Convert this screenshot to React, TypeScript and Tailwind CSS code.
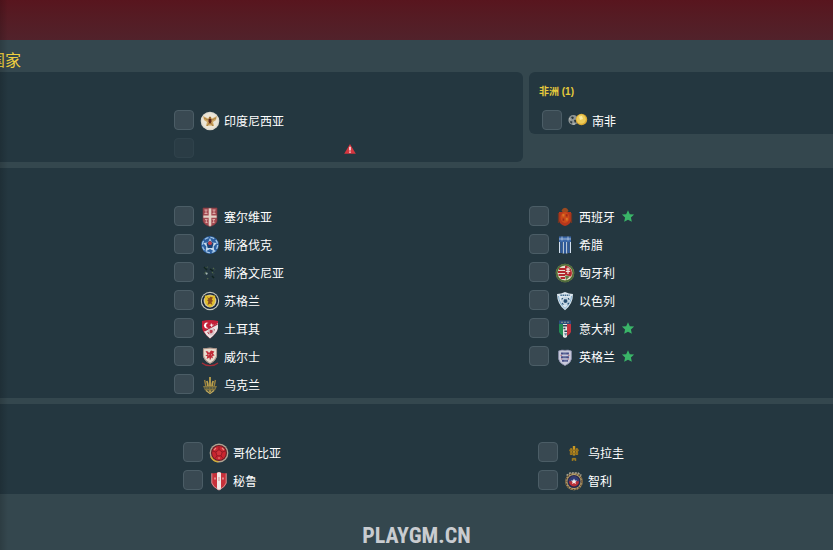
import type { ReactNode } from "react";

import clsx from "clsx";

type Nation = {
  id: string;
  name: string;
  starred?: boolean;
};

const STAR = "M10 .4 L12.9 6.6 L19.7 7.3 L14.6 11.9 L16.1 18.8 L10 15.3 L3.9 18.8 L5.4 11.9 L.3 7.3 L7.1 6.6 Z";

const badges: Record<string, ReactNode> = {
  indonesia: (
    <>
      <circle cx="10" cy="10" r="9.3" fill="#dcd8cd" />
      <circle cx="10" cy="10" r="8" fill="#ece5d6" />
      <path d="M3 5 L8 7.5 L10 5 L12 7.5 L17 5 L16 9 L13 11 L14 15 L10 14.5 L6 15 L7 11 L4 9 Z" fill="#cfa765" />
      <path d="M4 7 L8 9 M16 7 L12 9 M7 15 L9 12 M13 15 L11 12" stroke="#a9803f" />
      <path d="M8.5 8 H11.5 V11 L10 13 L8.5 11 Z" fill="#5c2418" />
      <path d="M9.2 6 H10.8 V8 H9.2 Z" fill="#8a5b2a" />
    </>
  ),
  southAfrica: (
    <>
      <circle cx="5.3" cy="9" r="4.9" fill="#8f9594" />
      <path d="M3 6 L5 5.4 L6 7 L4.2 8.2 Z M2.2 10 L4.4 10.5 L4 12.4 L2.4 12 Z M6 9 L8.6 8.4 V11.6 L6.6 11.6 Z" fill="#2b373d" />
      <path d="M1 7.5 L2.4 8.5 M4.6 13.2 L7 13" stroke="#c6cac8" />
      <circle cx="13.5" cy="8.5" r="5.7" fill="#d9a832" />
      <circle cx="13.2" cy="8.2" r="4.6" fill="#eccb58" />
      <path d="M11 5.5 L14 5 L15 8 L12 9 Z" fill="#fae9a0" />
    </>
  ),
  serbia: (
    <>
      <path d="M3 1 H17 V14 Q16 18 10 19.5 Q4 18 3 14 Z" fill="#a34a52" />
      <path d="M8.7 1 H11.3 V19 L10 19.5 L8.7 19 Z M3 8.4 H17 V10.8 H3 Z" fill="#e3d2c6" />
      <path
        d="M4.5 3 H7.5 M4.5 6.5 H7.5 M12.5 3 H15.5 M12.5 6.5 H15.5 M5 12.5 H7.5 M5.5 15.5 H7.5 M12.5 12.5 H15 M12.5 15.5 H14.5 M6 3 V6.5 M14 3 V6.5 M6.3 12.5 V15.5 M13.7 12.5 V15.5"
        stroke="#dda9a6"
      />
      <path d="M3 1 H17 V14 Q16 18 10 19.5 Q4 18 3 14 Z" fill="none" stroke="#7d3a41" strokeWidth=".7" />
    </>
  ),
  slovakia: (
    <>
      <circle cx="10" cy="10" r="8.9" fill="#2b5fa0" />
      <circle cx="10" cy="10" r="7.6" fill="none" stroke="#a3c6e6" strokeWidth="1.3" strokeDasharray="4 2" />
      <path d="M10 3 L12 7.5 L16.8 8 L13.6 11.5 L14.5 16.5 L10 14 L5.5 16.5 L6.4 11.5 L3.2 8 L8 7.5 Z" fill="#c4d9eb" />
      <path d="M10 5.4 L13.5 8.6 L12.3 13 H7.7 L6.5 8.6 Z" fill="#174175" />
      <circle cx="10" cy="8.2" r="1.9" fill="#c6424d" />
    </>
  ),
  slovenia: (
    <>
      <path d="M5 5 L8 4 M13 5 L15 7 M6 9 L4 11 M12 9 L14 11 M7 16 L9 15" stroke="#52694c" strokeWidth="1.2" strokeDasharray="1.4 1" />
      <path d="M4 4 L7 7 M10 6 L13 8 M12 13 L14 15" stroke="#10251f" strokeWidth="1.5" />
      <circle cx="6.6" cy="10.6" r="1.1" fill="#a5b5b2" />
    </>
  ),
  scotland: (
    <>
      <circle cx="10" cy="10" r="9.2" fill="#c6c9bd" />
      <circle cx="10" cy="10" r="8.1" fill="#17243a" />
      <circle cx="10" cy="10" r="6.4" fill="#cfc7a4" />
      <path d="M4.8 4.5 H15.2 V10 Q14.4 14.6 10 16.2 Q5.6 14.6 4.8 10 Z" fill="#e1be2d" />
      <path d="M7 5.8 L9 7.4 L10.4 5.8 L13 6.4 L11.8 8.6 L13 10 L11.5 11 L12.4 14 L10.2 12.4 L7.5 14 L8.4 10.6 L7 9 L8.4 8.4 Z" fill="#8a4d1f" />
    </>
  ),
  turkey: (
    <>
      <path d="M2 2 Q10 0 18 2 V9 Q17 14 10 19.5 Q3 14 2 9 Z" fill="#c51f38" />
      <path d="M18 4 V9 Q17 14 10 19.5 Q6 16.5 4 12.5 Z" fill="#ece4e4" />
      <path d="M17.6 5 L4.5 12" stroke="#b22439" strokeWidth="1.2" />
      <path d="M8.6 4 A3 3 0 1 0 8.6 9 A2.3 2.3 0 1 1 8.6 4" fill="#fff" />
      <path d="M11 3.8 L12 5.6 L14 5.8 L12.3 6.7 L11.8 8.4 L10.8 6.8 L9.4 6.3 L10.8 5.5 Z" fill="#f6e8e9" />
      <circle cx="11" cy="13" r="3.4" fill="#d8c6c8" />
      <path d="M10.2 11.4 L12.2 11.6 L12 13.6 L10.2 13.8 Z M7.6 13 L9 15 M13.6 10 L15 11.4" fill="#ba3546" stroke="#ba3546" />
    </>
  ),
  wales: (
    <>
      <path d="M3 1.5 Q10 0 17 1.5 V9 Q16 14 10 16.8 Q4 14 3 9 Z" fill="#e8ddcf" />
      <path d="M3.4 1.8 Q10 .6 16.6 1.8 V9 Q15.6 13.6 10 16.3 Q4.4 13.6 3.4 9 Z" fill="none" stroke="#9d7f73" strokeWidth=".8" />
      <path d="M5.5 4 L8 4.4 L9 6 L11 3.4 L14.4 4.4 L13 6.6 L14.6 8.4 L12.4 9 L13 11.4 L11.4 10.6 L10 13.4 L9.4 10.4 L6.6 12 L7.4 9.2 L5.2 8.6 L7.6 7.4 Z" fill="#c02b38" />
      <path d="M8 8 L9.4 7.6 M11 8.2 L12 7.4" stroke="#e8ddcf" strokeWidth=".7" />
      <path d="M2 16 Q5 18.7 10 18.6 Q15 18.7 18 16" fill="none" stroke="#a52d38" strokeWidth="1.3" />
    </>
  ),
  ukraine: (
    <>
      <path d="M10 2 V17 M6.8 6 Q9 11 6.8 13 M13.2 6 Q11 11 13.2 13" fill="none" stroke="#bda14c" strokeWidth="1.8" />
      <path d="M4.6 5 L6 12 L10 13.5 L14 12 L15.4 5" fill="none" stroke="#9a8240" strokeWidth="1.4" />
      <path d="M3 11 H17 L15 15.5 H5 Z" fill="#85773f" />
      <path d="M4.5 13 H15.5" stroke="#2f4452" strokeWidth="1.1" strokeDasharray="2 .8" />
      <path d="M6 15.5 L10 18.5 L14 15.5" fill="none" stroke="#c5ab5b" strokeWidth="1.3" />
    </>
  ),
  spain: (
    <>
      <path d="M6.5 3.4 L8 1.6 L10 .8 L12 1.6 L13.5 3.4 L12.5 5 H7.5 Z" fill="#9c4a20" />
      <path d="M4 5 H16 V14 Q15 17.5 10 19 Q5 17.5 4 14 Z" fill="#b6371c" />
      <path d="M3.5 6 V16 M16.5 6 V16" stroke="#6e3523" strokeWidth="1.3" />
      <ellipse cx="10" cy="10.5" rx="4.4" ry="5.4" fill="#cb4a1a" />
      <path d="M7.4 7 H9.4 V9.6 H7.4 Z M10.8 11 H12.8 V13.6 H10.8 Z" fill="#db7426" />
      <path d="M10.8 7.2 H12.6 V9.4 H10.8 Z M7.6 11.4 H9.2 V13.8 H7.6 Z" fill="#9c2a1a" />
    </>
  ),
  greece: (
    <>
      <path d="M4 1.5 H16 V7 H4 Z" fill="#3a67a8" />
      <path d="M4 4 H16 M7 1.5 V5.5 M13 1.5 V5.5" stroke="#b9cde4" strokeWidth=".8" />
      <path d="M4.6 7 V18 M8.3 7 V18.5 M11.7 7 V18.5 M15.4 7 V18" stroke="#d4e1ef" strokeWidth="1.2" />
      <path d="M6.5 7 V18 M10 7 V18.5 M13.5 7 V18" stroke="#2d599c" strokeWidth="2.2" />
    </>
  ),
  hungary: (
    <>
      <circle cx="10" cy="10" r="9.3" fill="#9a9552" />
      <circle cx="10" cy="10" r="8.4" fill="none" stroke="#4e6c3c" strokeWidth="1.6" />
      <circle cx="10" cy="10" r="7.3" fill="#e6ded2" />
      <path d="M4 6 H10 M3 9 H10 M3.5 12 H10 M5.5 15 H10" stroke="#b3282f" strokeWidth="1.9" />
      <path d="M10 2.8 A7.2 7.2 0 0 1 16 13.5 L10 12 Z" fill="#b3282f" />
      <path d="M13 4.5 V11 M11.2 6.2 H14.8 M10.8 8.4 H15.2" stroke="#eee4dc" strokeWidth="1.2" />
      <path d="M10 12.5 L15 13.5 L11 17 Z" fill="#5c7b42" />
    </>
  ),
  israel: (
    <>
      <path d="M2 3 Q6 3 10 1 Q14 3 18 3 Q18 13 10 19.2 Q2 13 2 3 Z" fill="#dbe7ef" />
      <path d="M3.4 5 Q4.4 13 10 17.4 Q15.6 13 16.6 5" fill="none" stroke="#8bb5d3" strokeWidth="1" />
      <path d="M5.4 4.2 H14.6" stroke="#456f90" strokeWidth="1.5" strokeDasharray="1.5 .6" />
      <circle cx="10.4" cy="10" r="4.3" fill="#c5d6e2" />
      <path d="M9.6 8.8 L11.6 9 L11.8 10.8 L10 11.4 L9 10.2 Z M6.6 8.4 L7.8 7 M13.2 7 L14.2 8.8 M7 12 L8.4 13.6 M12.6 13.4 L13.8 11.8" fill="#234b6d" stroke="#234b6d" strokeWidth="1.1" />
    </>
  ),
  italy: (
    <>
      <path d="M4 1.5 H16 V6 H4 Z" fill="#2a4d7e" />
      <path d="M4 5 H8 V17 Q5 15.5 4 13 Z" fill="#238c54" />
      <path d="M8 5 H12 V18 L10 19 L8 18 Z" fill="#e3e5e2" />
      <path d="M12 5 H16 V13 Q15 15.5 12 17 Z" fill="#c23440" />
      <path d="M6 3.3 H8 M9 3.3 H11 M12 3.3 H14" stroke="#8f9a8c" strokeWidth="1.1" />
      <path d="M8 6.8 H12 M8.4 9.6 H10.4 M9.4 12.2 H12" stroke="#2f4056" strokeWidth="1.5" />
      <path d="M9 14.4 L12 14 L11 17 Z" fill="#5f7795" />
    </>
  ),
  england: (
    <>
      <path d="M3.6 4 Q7 2.6 10 3.4 Q13 2.6 16.4 4 V12 Q15.8 16 10 18.6 Q4.2 16 3.6 12 Z" fill="#c9cadb" />
      <path d="M6 6.5 H14 M6 10.2 H14 M7 13.8 H13" stroke="#434c86" strokeWidth="2" strokeDasharray="2.8 .4 1.6 .3" />
      <path d="M5.5 8.3 H7 M13 8.3 H14.5 M6 12 H7.2 M12.6 12 H14" stroke="#b06676" strokeWidth="1" />
      <path d="M3.6 4 Q7 2.6 10 3.4 Q13 2.6 16.4 4 V12 Q15.8 16 10 18.6 Q4.2 16 3.6 12 Z" fill="none" stroke="#8a8eac" strokeWidth=".8" />
    </>
  ),
  colombia: (
    <>
      <circle cx="10" cy="10" r="9.4" fill="#b0a594" />
      <path d="M2 13.6 A9 9 0 0 0 9.4 18.8" fill="none" stroke="#d3ac36" strokeWidth="1.6" />
      <circle cx="10" cy="10" r="8" fill="#651c24" />
      <circle cx="10" cy="10" r="6.9" fill="#c9252f" />
      <path d="M10 6.7 L13.2 9 L12 12.8 H8 L6.8 9 Z" fill="#d2323a" stroke="#8d1822" strokeWidth=".9" />
      <path d="M10 6.7 V3.5 M13.2 9 L16.3 8 M12 12.8 L14 15.5 M8 12.8 L6 15.5 M6.8 9 L3.7 8" stroke="#8d1822" strokeWidth=".9" />
      <path d="M5 7 L7 5 M13 5 L15 7 M9 15 H11" stroke="#ea8a7e" strokeWidth="1.1" />
    </>
  ),
  peru: (
    <>
      <path d="M2.5 2 Q6 2.8 10 1 Q14 2.8 17.5 2 V12 Q16.5 16 10 19.3 Q3.5 16 2.5 12 Z" fill="#c7303a" />
      <path d="M8 1.8 L10 1 L12 1.8 V18.2 L10 19.3 L8 18.2 Z" fill="#efe8e6" />
      <path d="M2.8 2.4 V12 Q4 16 10 19 Q16 16 17.2 12 V2.4" fill="none" stroke="#d9a9a7" strokeWidth=".8" />
      <path d="M6 6.5 V8.5 M14 6.5 V8.5" stroke="#f1c2bf" strokeWidth="1.2" />
      <path d="M10 6 V10" stroke="#d7999c" strokeWidth="1.2" />
    </>
  ),
  uruguay: (
    <>
      <path d="M10 3 V12.5" stroke="#cb9a22" strokeWidth="2.4" />
      <path d="M7.2 5.2 V12 M12.8 5.2 V12" stroke="#b3841c" strokeWidth="2" />
      <path d="M5.2 7.4 H14.8 M5.8 10.5 H14.2" stroke="#94701d" strokeWidth="1.9" />
      <path d="M8.3 18 V15.4 H11.7 V18 M8.3 16.8 H11.7" fill="none" stroke="#ab821d" />
    </>
  ),
  chile: (
    <>
      <circle cx="10" cy="10.5" r="8.8" fill="#b9a36a" />
      <circle cx="10" cy="10.5" r="8" fill="none" stroke="#5c4430" strokeWidth="1.2" strokeDasharray="2 1" />
      <circle cx="10" cy="10.5" r="6.6" fill="#242b52" />
      <circle cx="10" cy="10.5" r="5" fill="#b92f37" />
      <path d="M5 10.2 A5 5 0 0 1 15 10.2 Z" fill="#2d3c79" />
      <path d="M10 7.4 L10.9 9.4 L13 9.6 L11.4 11 L12 13 L10 12 L8 13 L8.6 11 L7 9.6 L9.1 9.4 Z" fill="#f3eeee" />
      <path d="M2.6 4.4 L6 2 H14 L17.4 4.4" fill="none" stroke="#a9a391" strokeWidth="1.4" strokeDasharray="2 1" />
    </>
  ),
};

const europeLeft: Nation[] = [
  { id: "serbia", name: "塞尔维亚" },
  { id: "slovakia", name: "斯洛伐克" },
  { id: "slovenia", name: "斯洛文尼亚" },
  { id: "scotland", name: "苏格兰" },
  { id: "turkey", name: "土耳其" },
  { id: "wales", name: "威尔士" },
  { id: "ukraine", name: "乌克兰" },
];

const europeRight: Nation[] = [
  { id: "spain", name: "西班牙", starred: true },
  { id: "greece", name: "希腊" },
  { id: "hungary", name: "匈牙利" },
  { id: "israel", name: "以色列" },
  { id: "italy", name: "意大利", starred: true },
  { id: "england", name: "英格兰", starred: true },
];

const southAmericaLeft: Nation[] = [
  { id: "colombia", name: "哥伦比亚" },
  { id: "peru", name: "秘鲁" },
];

const southAmericaRight: Nation[] = [
  { id: "uruguay", name: "乌拉圭" },
  { id: "chile", name: "智利" },
];

const checkboxClass =
  "size-5 shrink-0 appearance-none rounded-sm border border-[#4b5d66] bg-[#394952] checked:bg-[#3ba55d] disabled:opacity-30";

const NationRow = ({ id, name, starred }: Nation) => (
  <li className="flex h-[22px] items-start gap-1.5">
    <input
      type="checkbox"
      id={id}
      className={checkboxClass}
    />
    <label
      htmlFor={id}
      className="flex h-full items-center gap-1 text-xs whitespace-nowrap text-white"
    >
      <svg
        viewBox="0 0 20 20"
        className="size-5 shrink-0"
        aria-hidden="true"
      >
        {badges[id]}
      </svg>
      {name}
      {starred && (
        <svg
          viewBox="0 0 20 20"
          className="ml-0.5 size-3.5"
          aria-hidden="true"
        >
          <path
            d={STAR}
            fill="#3ab568"
            transform="translate(1 0) scale(.9)"
          />
        </svg>
      )}
    </label>
  </li>
);

const NationList = ({ nations, children }: { nations: Nation[]; children?: ReactNode }) => (
  <ul className="flex flex-col gap-1.5">
    {nations.map((nation) => (
      <NationRow
        key={nation.id}
        {...nation}
      />
    ))}
    {children}
  </ul>
);

const Panel = ({ className, children }: { className?: string; children: ReactNode }) => (
  <section className={clsx("bg-[#243740] pb-0.5", className)}>{children}</section>
);

const App = () => {
  return (
    <div className="relative flex min-h-screen flex-col overflow-hidden bg-[#34474e] font-['Noto_Sans_CJK_SC',sans-serif]">
      <header className="h-10 bg-linear-to-b from-[#58151e] to-[#51222b]" />

      <h1 className="-ml-[11px] flex h-8 items-center pt-1.5 text-base text-[#f0cf3f]">国家</h1>

      <main className="flex flex-col gap-1.5">
        <div className="flex items-start gap-1.5">
          <Panel className="w-[523px] shrink-0 rounded-r-md pt-[38px] pl-[174px]">
            <NationList nations={[{ id: "indonesia", name: "印度尼西亚" }]}>
              <li className="flex h-[22px] items-start">
                <input
                  type="checkbox"
                  disabled
                  aria-label="不可用"
                  className={checkboxClass}
                />
                <svg
                  viewBox="0 0 12 10"
                  className="mt-1.5 ml-[150px] h-2.5 w-3"
                  aria-hidden="true"
                >
                  <path
                    d="M6 0 L11.8 9.8 H.2 Z"
                    fill="#d5363f"
                  />
                  <path
                    d="M6 2.8 V6.4 M6 7.4 V8.8"
                    stroke="#fff"
                    strokeWidth="1.4"
                  />
                </svg>
              </li>
            </NationList>
          </Panel>

          <Panel className="grow rounded-l-md">
            <h2 className="flex h-[38px] items-center pl-2.5 font-['Liberation_Sans','Noto_Sans_CJK_SC',sans-serif] text-[10px] font-bold text-[#e6cb3c]">
              非洲 (1)
            </h2>
            <div className="pl-[13px]">
              <NationList nations={[{ id: "southAfrica", name: "南非" }]} />
            </div>
          </Panel>
        </div>

        <Panel className="grid grid-cols-[355px_1fr] pt-[38px] pl-[174px]">
          <NationList nations={europeLeft} />
          <NationList nations={europeRight} />
        </Panel>

        <Panel className="grid grid-cols-[355px_1fr] pt-[38px] pl-[183px]">
          <NationList nations={southAmericaLeft} />
          <NationList nations={southAmericaRight} />
        </Panel>
      </main>

      <footer className="flex grow items-end justify-center pb-0.5">
        <p className="font-['Roboto_Condensed',Roboto,sans-serif] text-[22px] leading-6 font-bold text-[#c9ccd0]">
          PLAYGM.CN
        </p>
      </footer>

      {/* soft shade along the left edge */}
      <div className="pointer-events-none absolute inset-y-0 left-0 w-2 bg-linear-to-r from-black/15 to-transparent" />
    </div>
  );
};

export default App;
